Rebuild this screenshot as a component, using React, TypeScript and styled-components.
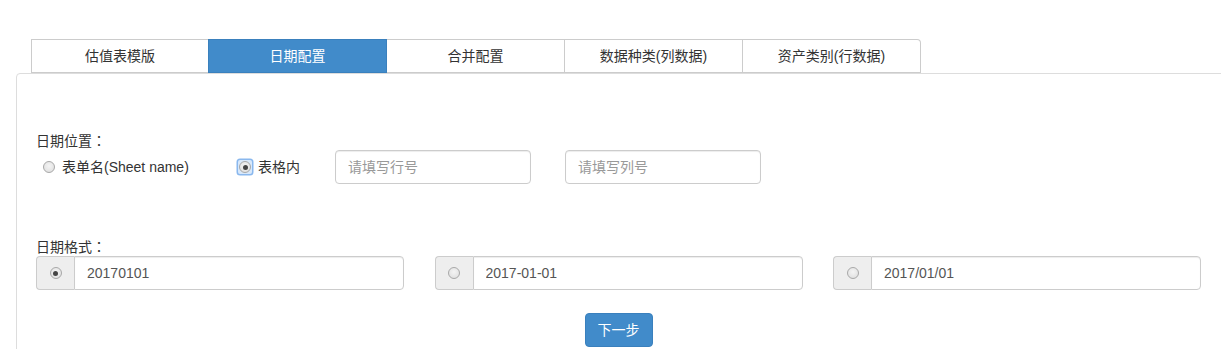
import React from "react";
import styled, { createGlobalStyle, css } from "styled-components";

const Global = createGlobalStyle`
  html, body {
    margin: 0;
    padding: 0;
    background: #fff;
    overflow: hidden;
  }
  body {
    font-family: "Liberation Sans", "Noto Sans CJK SC", sans-serif;
    font-size: 14px;
    color: #333;
    line-height: 20px;
  }
  * { box-sizing: border-box; }
`;

const Page = styled.div`
  padding: 39px 0 0 16px;
  width: 1260px;
`;

const TabBar = styled.div`
  display: flex;
  margin-left: 15px;
  height: 34px;
`;

const Tab = styled.div<{ $active?: boolean; $last?: boolean }>`
  width: 178px;
  height: 34px;
  display: flex;
  align-items: center;
  justify-content: center;
  border: 1px solid #ccc;
  border-left: none;
  background: #fff;
  color: #333;
  font-size: 14px;
  &:first-child { border-left: 1px solid #ccc; }
  ${(p) =>
    p.$last &&
    css`
      border-top-right-radius: 4px;
    `}
  ${(p) =>
    p.$active &&
    css`
      background: #418bca;
      border-color: #3a80bd;
      border-left: 1px solid #3a80bd;
      color: #fff;
      margin-left: -1px;
      width: 179px;
    `}
`;

const Panel = styled.div`
  border: 1px solid #ddd;
  border-top-left-radius: 4px;
  width: 1240px;
  padding: 56px 0 40px 19px;
`;

const Content = styled.div`
  width: 1165px;
`;

const Label = styled.div`
  height: 20px;
  line-height: 20px;
  color: #333;
`;

const Colon = styled.span`
  font-family: "Noto Sans CJK TC", "Noto Sans CJK SC", sans-serif;
`;

const RadioRow = styled.div`
  display: flex;
  align-items: center;
  height: 34px;
  padding-left: 6px;
`;

const RadioItem = styled.label<{ $w: number }>`
  display: flex;
  align-items: center;
  gap: 6px;
  width: ${(p) => p.$w}px;
  color: #333;
`;

const RadioWrap = styled.span<{ $focus?: boolean }>`
  display: inline-flex;
  align-items: center;
  justify-content: center;
  width: 14px;
  height: 14px;
  border-radius: 2px;
  ${(p) =>
    p.$focus &&
    css`
      box-shadow: 0 0 0 1.5px #8ab8ee;
      background: #d8e8fa;
    `}
`;

const Radio = styled.span<{ $checked?: boolean }>`
  position: relative;
  width: 12px;
  height: 12px;
  border-radius: 50%;
  border: 1px solid #a8a8a8;
  background: radial-gradient(circle at 50% 40%, #f4f4f4 0%, #dcdcdc 100%);
  ${(p) =>
    p.$checked &&
    css`
      &::after {
        content: "";
        position: absolute;
        left: 2.5px;
        top: 2.5px;
        width: 5px;
        height: 5px;
        border-radius: 50%;
        background: #444;
      }
    `}
`;

const TextInput = styled.input`
  width: 196px;
  height: 34px;
  padding: 6px 12px;
  border: 1px solid #ccc;
  border-radius: 4px;
  font-family: "Liberation Sans", "Noto Sans CJK SC", sans-serif;
  font-size: 14px;
  color: #555;
  box-shadow: inset 0 1px 1px rgba(0, 0, 0, 0.075);
  outline: none;
  &::placeholder { color: #999; }
`;

const Spacer = styled.div<{ $w: number }>`
  width: ${(p) => p.$w}px;
  flex: none;
`;

const FormatBlock = styled.div`
  margin-top: 52px;
`;

const Grid = styled.div`
  display: grid;
  grid-template-columns: repeat(3, 368px);
  justify-content: space-between;
`;

const Group = styled.div`
  display: flex;
  height: 34px;
  width: 368px;
`;

const Addon = styled.span`
  width: 38px;
  height: 34px;
  flex: none;
  display: flex;
  align-items: center;
  justify-content: center;
  background: #eee;
  border: 1px solid #ccc;
  border-right: none;
  border-radius: 4px 0 0 4px;
`;

const GroupInput = styled.input`
  flex: 1;
  min-width: 0;
  height: 34px;
  padding: 6px 12px;
  border: 1px solid #ccc;
  border-radius: 0 4px 4px 0;
  font-family: "Liberation Sans", "Noto Sans CJK SC", sans-serif;
  font-size: 14px;
  color: #555;
  box-shadow: inset 0 1px 1px rgba(0, 0, 0, 0.075);
  outline: none;
`;

const ButtonRow = styled.div`
  display: flex;
  justify-content: center;
  margin-top: 23px;
`;

const Button = styled.button`
  height: 34px;
  padding: 6px 12px;
  background: #418bca;
  border: 1px solid #3a80bd;
  border-radius: 4px;
  color: #fff;
  font-family: "Liberation Sans", "Noto Sans CJK SC", sans-serif;
  font-size: 14px;
  line-height: 20px;
`;

const tabs = ["估值表模版", "日期配置", "合并配置", "数据种类(列数据)", "资产类别(行数据)"];
const formats = [
  { v: "20170101", checked: true },
  { v: "2017-01-01", checked: false },
  { v: "2017/01/01", checked: false },
];

export default function App() {
  return (
    <>
      <Global />
      <Page>
        <TabBar>
          {tabs.map((t, i) => (
            <Tab key={t} $active={i === 1} $last={i === tabs.length - 1}>
              {t}
            </Tab>
          ))}
        </TabBar>
        <Panel>
          <Content>
            <Label>
              日期位置<Colon>：</Colon>
            </Label>
            <RadioRow>
              <RadioItem $w={196}>
                <RadioWrap>
                  <Radio />
                </RadioWrap>
                表单名(Sheet name)
              </RadioItem>
              <RadioItem $w={97}>
                <RadioWrap $focus>
                  <Radio $checked />
                </RadioWrap>
                表格内
              </RadioItem>
              <TextInput placeholder="请填写行号" />
              <Spacer $w={34} />
              <TextInput placeholder="请填写列号" />
            </RadioRow>
            <FormatBlock>
              <Label>
                日期格式<Colon>：</Colon>
              </Label>
              <Grid>
                {formats.map((f) => (
                  <Group key={f.v}>
                    <Addon>
                      <Radio $checked={f.checked} />
                    </Addon>
                    <GroupInput defaultValue={f.v} />
                  </Group>
                ))}
              </Grid>
            </FormatBlock>
            <ButtonRow>
              <Button>下一步</Button>
            </ButtonRow>
          </Content>
        </Panel>
      </Page>
    </>
  );
}
